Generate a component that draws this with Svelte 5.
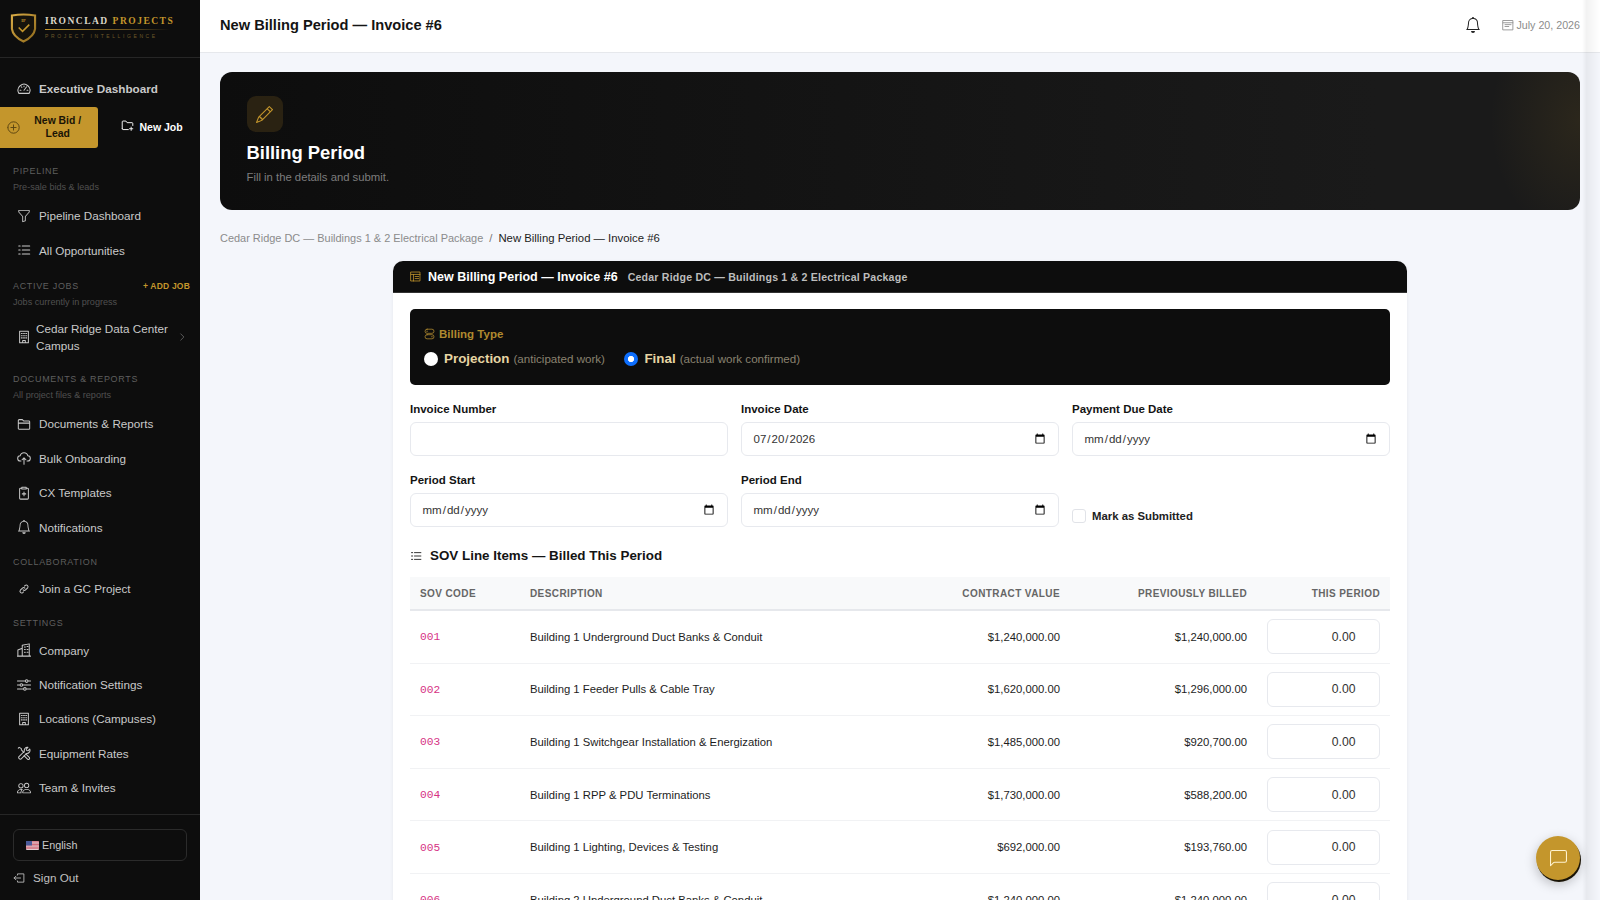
<script>
  const icons = {
    gauge: 'M2.2 13h11.6a6.8 6.8 0 1 0-11.6 0zM8 9.5l3-4M3.5 9.5h1M11.5 9.5h1M8 4.5v1M5 5.5l.6.6',
    list: 'M6 3.5h8.5M6 8h8.5M6 12.5h8.5M2 3.5h1.6M2 8h1.6M2 12.5h1.6',
    folderPlus: 'M1.5 12V3.5a1 1 0 0 1 1-1h3.5l1.5 2h6a1 1 0 0 1 1 1V8M1.5 12a1 1 0 0 0 1 1H9M12.5 10v4M10.5 12h4',
    plusCircle: 'M1 8a7 7 0 1 0 14 0a7 7 0 1 0-14 0M8 4.8v6.4M4.8 8h6.4',
    building: 'M3 1.5h10v13H3zM5 4h1M7.5 4h1M10 4h1M5 6.5h1M7.5 6.5h1M10 6.5h1M5 9h1M7.5 9h1M10 9h1M6.5 14.5V12h3v2.5',
    folder: 'M1.5 13V4a1 1 0 0 1 1-1h3.6l1.4 1.5h6a1 1 0 0 1 1 1V13a1 1 0 0 1-1 1h-11a1 1 0 0 1-1-1zM1.5 7h13',
    cloud: 'M4.5 11.5H4a3 3 0 0 1-.4-6 4.5 4.5 0 0 1 8.8 0 3 3 0 0 1-.4 6h-.5M8 15V8M5.8 10 8 7.8l2.2 2.2',
    clipboard: 'M5 2.5H4a1 1 0 0 0-1 1V14a1 1 0 0 0 1 1h8a1 1 0 0 0 1-1V3.5a1 1 0 0 0-1-1h-1M5.5 1.5h5v2h-5zM8 7v4M6 9h4',
    link: 'M7 9a2 2 0 0 0 2.8 0l2.4-2.4a2 2 0 0 0-2.8-2.8l-.8.8M9 7a2 2 0 0 0-2.8 0L3.8 9.4a2 2 0 0 0 2.8 2.8l.8-.8',
    buildings: 'M1 15V8l5-2v9M6 15V2.5L14 1v14M.5 15h15M8.5 4.5h1M11.5 4h1M8.5 7.5h1M11.5 7.5h1M8.5 10.5h1M11.5 10.5h1',
    sliders: 'M.5 3.5h9M12.5 3.5h3M.5 8h3M6.5 8h9M.5 12.5h7M10.5 12.5h5M9.5 3.5a1.5 1.5 0 1 0 3 0a1.5 1.5 0 1 0-3 0M3.5 8a1.5 1.5 0 1 0 3 0a1.5 1.5 0 1 0-3 0M7.5 12.5a1.5 1.5 0 1 0 3 0a1.5 1.5 0 1 0-3 0',
    tools: 'M1.5 2.5l1-1 2.5 1.5v1.5l3 3M10 9l4 4a1.4 1.4 0 0 1-2 2l-4-4M14.5 3.5l-2 2-1.5-.5-.5-1.5 2-2a3.5 3.5 0 0 0-4 4.5L2 12.5a2 2 0 0 0 2.5 2.5L11 8.5a3.5 3.5 0 0 0 3.5-5z',
    signOut: 'M6 4V2.5h8.5v11H6V12M10 8H1.5M4 5.5 1.5 8 4 10.5',
    toggles: 'M4.5 1h7a3 3 0 0 1 0 6h-7a3 3 0 0 1 0-6zM4.5 9h7a3 3 0 0 1 0 6h-7a3 3 0 0 1 0-6zM4 4h1M11 12h1',
    invoice: 'M1.5 1.5h13v13h-13zM1.5 5h13M5 5v9.5M7.5 8h5M7.5 11h5',
    calendar: 'M1.5 2h13v12.5h-13zM1.5 5h13M4 7.5h8M4 10h5',
    chevron: 'M6 3l5 5-5 5',
  };
  const solid = {
    funnel: 'M1.5 1.5A.5.5 0 0 1 2 1h12a.5.5 0 0 1 .5.5v2a.5.5 0 0 1-.128.334L10 8.692V13.5a.5.5 0 0 1-.342.474l-3 1A.5.5 0 0 1 6 14.5V8.692L1.628 3.834A.5.5 0 0 1 1.5 3.5zm1 .5v1.308l4.372 4.858A.5.5 0 0 1 7 8.5v5.306l2-.666V8.5a.5.5 0 0 1 .128-.334L13.5 3.308V2z',
    bell: 'M8 16a2 2 0 0 0 2-2H6a2 2 0 0 0 2 2M8 1.918l-.797.161A4 4 0 0 0 4 6c0 .628-.134 2.197-.459 3.742-.16.767-.376 1.566-.663 2.258h10.244c-.287-.692-.502-1.49-.663-2.258C12.134 8.197 12 6.628 12 6a4 4 0 0 0-3.203-3.92zM14.22 12c.223.447.481.801.78 1H1c.299-.199.557-.553.78-1C2.68 10.2 3 6.88 3 6c0-2.42 1.72-4.44 4.005-4.901a1 1 0 1 1 1.99 0A5 5 0 0 1 13 6c0 .88.32 4.2 1.22 6',
    pencil: 'M12.146.146a.5.5 0 0 1 .708 0l3 3a.5.5 0 0 1 0 .708l-10 10a.5.5 0 0 1-.168.11l-5 2a.5.5 0 0 1-.65-.65l2-5a.5.5 0 0 1 .11-.168zM11.207 2.5 13.5 4.793 14.793 3.5 12.5 1.207zm1.586 3L10.5 3.207 4 9.707V10h.5a.5.5 0 0 1 .5.5v.5h.5a.5.5 0 0 1 .5.5v.5h.293zm-9.761 5.175-.106.106-1.528 3.821 3.821-1.528.106-.106A.5.5 0 0 1 5 12.5V12h-.5a.5.5 0 0 1-.5-.5V11h-.5a.5.5 0 0 1-.468-.325',
    people: 'M15 14s1 0 1-1-1-4-5-4-5 3-5 4 1 1 1 1zm-7.978-1L7 12.996c.001-.264.167-1.03.76-1.72C8.312 10.629 9.282 10 11 10c1.717 0 2.687.63 3.24 1.276.593.69.758 1.457.76 1.72l-.008.002-.014.002zM11 7a2 2 0 1 0 0-4 2 2 0 0 0 0 4m3-2a3 3 0 1 1-6 0 3 3 0 0 1 6 0M6.936 9.28a6 6 0 0 0-1.23-.247A7 7 0 0 0 5 9c-4 0-5 3-5 4q0 1 1 1h4.216A2.24 2.24 0 0 1 5 13c0-1.01.377-2.042 1.09-2.904.243-.294.526-.569.846-.816M4.92 10A5.5 5.5 0 0 0 4 13H1c0-.26.164-1.03.76-1.724.545-.636 1.492-1.256 3.16-1.275ZM1.5 5.5a3 3 0 1 1 6 0 3 3 0 0 1-6 0m3-2a2 2 0 1 0 0 4 2 2 0 0 0 0-4',
    chat: 'M14 1a1 1 0 0 1 1 1v8a1 1 0 0 1-1 1H4.414A2 2 0 0 0 3 11.586l-2 2V2a1 1 0 0 1 1-1zM2 0a2 2 0 0 0-2 2v12.793a.5.5 0 0 0 .854.353l2.853-2.853A1 1 0 0 1 4.414 12H14a2 2 0 0 0 2-2V2a2 2 0 0 0-2-2z',
  };

  const docs = [
    ['folder', 'Documents & Reports'],
    ['cloud', 'Bulk Onboarding'],
    ['clipboard', 'CX Templates'],
    ['bell', 'Notifications'],
  ];
  const settings = [
    ['buildings', 'Company'],
    ['sliders', 'Notification Settings'],
    ['building', 'Locations (Campuses)'],
    ['tools', 'Equipment Rates'],
    ['people', 'Team & Invites'],
  ];
  const lines = [
    ['001', 'Building 1 Underground Duct Banks & Conduit', '$1,240,000.00', '$1,240,000.00'],
    ['002', 'Building 1 Feeder Pulls & Cable Tray', '$1,620,000.00', '$1,296,000.00'],
    ['003', 'Building 1 Switchgear Installation & Energization', '$1,485,000.00', '$920,700.00'],
    ['004', 'Building 1 RPP & PDU Terminations', '$1,730,000.00', '$588,200.00'],
    ['005', 'Building 1 Lighting, Devices & Testing', '$692,000.00', '$193,760.00'],
    ['006', 'Building 2 Underground Duct Banks & Conduit', '$1,240,000.00', '$1,240,000.00'],
  ];
</script>

{#snippet icon(name, cls = 'ico')}
  <svg class={cls} viewBox="0 0 16 16" aria-hidden="true">
    {#if solid[name]}
      <path d={solid[name]} fill="currentColor" />
    {:else}
      <path d={icons[name]} fill="none" stroke="currentColor" stroke-width="1.15" stroke-linecap="round" stroke-linejoin="round" />
    {/if}
  </svg>
{/snippet}

{#snippet navItem(name, text)}
  <a class="nav-item" href="#top">
    {@render icon(name)}
    <span>{text}</span>
  </a>
{/snippet}

<div class="app">
  <aside class="sidebar">
    <div class="brand">
      <svg class="shield" viewBox="0 0 28 32" aria-hidden="true">
        <defs>
          <linearGradient id="gold" x1="0" y1="0" x2="1" y2="1">
            <stop offset="0" stop-color="#d9ab45" />
            <stop offset="1" stop-color="#8f6a1c" />
          </linearGradient>
        </defs>
        <path d="M2 3 Q14 1 26 3 V17 Q25 25 14 30 Q3 25 2 17 Z" fill="#16130c" stroke="url(#gold)" stroke-width="2.2" />
        <path d="M9 15.5l4 4 7-7" fill="none" stroke="#c4962c" stroke-width="1.6" />
        <text x="14" y="9.5" text-anchor="middle" font-size="4.5" font-weight="700" font-family="Liberation Serif, serif" fill="#c4962c">IP</text>
      </svg>
      <div class="brand-text">
        <div class="brand-name">IRONCLAD <b>PROJECTS</b></div>
        <div class="brand-rule"></div>
        <div class="brand-sub">PROJECT INTELLIGENCE</div>
      </div>
    </div>

    <nav class="nav">
      <a class="nav-item exec" href="#top">
        {@render icon('gauge')}
        <span>Executive Dashboard</span>
      </a>
      <div class="quick">
        <button class="new-bid">
          {@render icon('plusCircle', 'bid-ico')}
          <span>New Bid / Lead</span>
        </button>
        <button class="new-job">
          {@render icon('folderPlus', 'job-ico')}
          <span>New Job</span>
        </button>
      </div>

      <div class="section first">
        <div class="sec-title">PIPELINE</div>
        <div class="sec-sub">Pre-sale bids &amp; leads</div>
      </div>
      {@render navItem('funnel', 'Pipeline Dashboard')}
      {@render navItem('list', 'All Opportunities')}

      <div class="section active">
        <div class="sec-title row">ACTIVE JOBS <span class="add-job">+ ADD JOB</span></div>
        <div class="sec-sub">Jobs currently in progress</div>
      </div>
      <a class="job" href="#top">
        {@render icon('building')}
        <span>Cedar Ridge Data Center Campus</span>
        {@render icon('chevron', 'chev')}
      </a>

      <div class="section docs">
        <div class="sec-title">DOCUMENTS &amp; REPORTS</div>
        <div class="sec-sub">All project files &amp; reports</div>
      </div>
      {#each docs as [name, text]}
        {@render navItem(name, text)}
      {/each}

      <div class="section solo">
        <div class="sec-title">COLLABORATION</div>
      </div>
      {@render navItem('link', 'Join a GC Project')}

      <div class="section solo">
        <div class="sec-title">SETTINGS</div>
      </div>
      {#each settings as [name, text]}
        {@render navItem(name, text)}
      {/each}
    </nav>

    <div class="side-foot">
      <div class="lang">
        <svg class="flag" viewBox="0 0 13 9" aria-hidden="true">
          <rect width="13" height="9" rx="1" fill="#e8e4e6" />
          <path d="M0 .7h13M0 2.1h13M0 3.5h13M0 4.9h13M0 6.3h13M0 7.7h13" stroke="#c8455a" stroke-width=".75" />
          <rect width="6" height="4.5" fill="#4a5a9a" />
        </svg>
        English
      </div>
      <a class="sign-out" href="#top">
        {@render icon('signOut')}
        Sign Out
      </a>
    </div>
  </aside>

  <div class="main">
    <header class="topbar">
      <h1>New Billing Period — Invoice #6</h1>
      <div class="top-right">
        {@render icon('bell', 'bell')}
        <span class="date">{@render icon('calendar', 'date-ico')}July 20, 2026</span>
      </div>
    </header>

    <div class="content">
      <section class="hero">
        <div class="hero-ico">{@render icon('pencil', 'pencil')}</div>
        <h2>Billing Period</h2>
        <p>Fill in the details and submit.</p>
      </section>

      <div class="crumbs">
        <a href="#top">Cedar Ridge DC — Buildings 1 &amp; 2 Electrical Package</a>
        <span class="slash">/</span>
        <span class="current">New Billing Period — Invoice #6</span>
      </div>

      <section class="card">
        <div class="card-head">
          {@render icon('invoice', 'head-ico')}
          <strong>New Billing Period — Invoice #6</strong>
          <small>Cedar Ridge DC — Buildings 1 &amp; 2 Electrical Package</small>
        </div>
        <div class="card-body">
          <div class="billing-type">
            <div class="bt-label">{@render icon('toggles', 'bt-ico')}Billing Type</div>
            <div class="bt-options">
              <label><input type="radio" name="btype" /><b>Projection</b> <em>(anticipated work)</em></label>
              <label><input type="radio" name="btype" checked /><b>Final</b> <em>(actual work confirmed)</em></label>
            </div>
          </div>

          <div class="fields">
            <div class="field">
              <label for="inv-no">Invoice Number</label>
              <input id="inv-no" type="text" />
            </div>
            <div class="field">
              <label for="inv-date">Invoice Date</label>
              <input id="inv-date" type="date" value="2026-07-20" />
            </div>
            <div class="field">
              <label for="due">Payment Due Date</label>
              <input id="due" type="date" />
            </div>
            <div class="field">
              <label for="start">Period Start</label>
              <input id="start" type="date" />
            </div>
            <div class="field">
              <label for="end">Period End</label>
              <input id="end" type="date" />
            </div>
            <label class="submitted"><input type="checkbox" />Mark as Submitted</label>
          </div>

          <h3 class="sov-title">{@render icon('list', 'sov-ico')}SOV Line Items — Billed This Period</h3>

          <table>
            <colgroup>
              <col style="width: 110px" />
              <col />
              <col style="width: 150px" />
              <col style="width: 187px" />
              <col style="width: 133px" />
            </colgroup>
            <thead>
              <tr>
                <th>SOV CODE</th>
                <th>DESCRIPTION</th>
                <th class="num">CONTRACT VALUE</th>
                <th class="num">PREVIOUSLY BILLED</th>
                <th class="num">THIS PERIOD</th>
              </tr>
            </thead>
            <tbody>
              {#each lines as [code, desc, contract, prev]}
                <tr>
                  <td><code>{code}</code></td>
                  <td>{desc}</td>
                  <td class="num">{contract}</td>
                  <td class="num">{prev}</td>
                  <td class="num"><input class="amount" type="number" value="0.00" step="0.01" /></td>
                </tr>
              {/each}
            </tbody>
          </table>
        </div>
      </section>
    </div>
  </div>

  <div class="edge-fade"></div>
  <button class="chat" aria-label="Open chat">{@render icon('chat', 'chat-ico')}</button>
</div>

<style>
  :global(body) {
    font-family: "Liberation Sans", Arial, sans-serif;
    background: #f4f6fb;
  }

  .app {
    display: flex;
    height: 100vh;
    overflow: hidden;
  }

  .sidebar {
    width: 200px;
    flex-shrink: 0;
    background: #0d0d0d;
    color: #c9c9c9;
    display: flex;
    flex-direction: column;
  }

  .brand {
    height: 58px;
    box-sizing: border-box;
    display: flex;
    align-items: center;
    gap: 8px;
    padding: 0 10px 2px 10px;
    border-bottom: 1px solid #262626;
  }

  .shield {
    width: 27px;
    height: 32px;
    flex-shrink: 0;
  }

  .brand-name {
    font-family: "Liberation Serif", serif;
    font-weight: 700;
    font-size: 9.5px;
    letter-spacing: 1.5px;
    color: #dcd7c9;
    white-space: nowrap;
  }

  .brand-name b {
    color: #c4962c;
  }

  .brand-rule {
    height: 1px;
    margin: 3px 4px 3px 0;
    background: linear-gradient(90deg, #c4962c, #5d4a1e 70%, transparent);
  }

  .brand-sub {
    font-size: 5px;
    letter-spacing: 2.6px;
    color: #6d5a2a;
    white-space: nowrap;
  }

  .nav {
    flex: 1;
    padding-top: 13px;
    min-height: 0;
  }

  .nav-item {
    display: flex;
    align-items: center;
    gap: 8px;
    height: 34.4px;
    padding-left: 17px;
    font-size: 11.7px;
    color: #c9c9c9;
    text-decoration: none;
  }

  .ico {
    width: 14px;
    height: 14px;
    flex-shrink: 0;
  }

  .exec {
    font-weight: 700;
    height: 35px;
  }

  .quick {
    display: flex;
    align-items: center;
    margin-top: 1px;
  }

  button {
    font-family: inherit;
    border: 0;
    cursor: pointer;
  }

  .new-bid {
    width: 97.5px;
    height: 41px;
    flex-shrink: 0;
    display: flex;
    align-items: center;
    padding: 0 6px 0 7px;
    background: #c4962c;
    color: #1a1406;
    border-radius: 0 3px 3px 0;
    font-size: 10.4px;
    font-weight: 700;
    line-height: 12.5px;
  }

  .new-bid span {
    flex: 1;
    padding: 0 0 0 4px;
    text-align: center;
  }

  .bid-ico {
    width: 13px;
    height: 13px;
    flex-shrink: 0;
    color: #5a4310;
  }

  .new-job {
    display: flex;
    align-items: center;
    gap: 6px;
    margin: -2px 0 0 23px;
    padding: 0;
    background: none;
    color: #fff;
    font-size: 10.5px;
    font-weight: 700;
  }

  .job-ico {
    width: 13px;
    height: 13px;
    margin-top: -3px;
  }

  .section {
    padding: 0 13px;
    margin-top: 11px;
  }

  .section.first {
    margin-top: 16.5px;
  }

  .section.active {
    margin-top: 12.5px;
  }

  .section.docs {
    margin-top: 16px;
  }

  .sec-title {
    font-size: 8.96px;
    letter-spacing: 0.7px;
    color: #5f5f5f;
    line-height: 12px;
  }

  .sec-title.row {
    display: flex;
    justify-content: space-between;
  }

  .add-job {
    margin-right: -3px;
    font-size: 8.5px;
    font-weight: 700;
    letter-spacing: 0.2px;
    color: #c4962c;
  }

  .sec-sub {
    font-size: 9.1px;
    color: #505050;
    line-height: 12px;
    margin-top: 4px;
    margin-bottom: 6px;
  }

  .section.solo {
    margin-top: 11.5px;
    margin-bottom: 4px;
  }

  .section.solo + .nav-item {
    height: 34px;
  }

  .job {
    display: flex;
    align-items: center;
    gap: 5px;
    margin-top: 9px;
    padding: 3px 13px 3px 17px;
    font-size: 11.7px;
    line-height: 17px;
    color: #c9c9c9;
    text-decoration: none;
  }

  .job span {
    flex: 1;
  }

  .chev {
    width: 10px;
    height: 10px;
    color: #777;
  }

  .side-foot {
    flex-shrink: 0;
    height: 86px;
    box-sizing: border-box;
    border-top: 1px solid #262626;
    padding: 14px 13px 0;
  }

  .lang {
    display: flex;
    align-items: center;
    gap: 3px;
    height: 32px;
    box-sizing: border-box;
    padding-left: 12px;
    border: 1px solid #2b2b2b;
    border-radius: 6px;
    font-size: 10.8px;
    color: #c9c9c9;
  }

  .flag {
    width: 13px;
    height: 9px;
  }

  .sign-out {
    display: flex;
    align-items: center;
    gap: 8px;
    height: 33px;
    font-size: 11.7px;
    color: #c0c0c0;
    text-decoration: none;
  }

  .sign-out .ico {
    width: 12px;
    height: 12px;
  }

  .main {
    flex: 1;
    min-width: 0;
    display: flex;
    flex-direction: column;
  }

  .topbar {
    height: 53px;
    flex-shrink: 0;
    box-sizing: border-box;
    display: flex;
    align-items: center;
    justify-content: space-between;
    padding: 0 20px 2px;
    background: #fff;
    border-bottom: 1px solid #e6e8ec;
  }

  .topbar h1 {
    margin: 0;
    font-size: 14.64px;
    font-weight: 700;
    color: #141414;
  }

  .top-right {
    display: flex;
    align-items: center;
    gap: 21px;
  }

  .bell {
    width: 16px;
    height: 16px;
    color: #222;
  }

  .date {
    display: flex;
    align-items: center;
    gap: 2px;
    font-size: 10.7px;
    color: #8c8c8c;
  }

  .date-ico {
    width: 12px;
    height: 12px;
  }

  .content {
    padding: 19px 20px 0;
    min-height: 0;
  }

  .hero {
    height: 138px;
    box-sizing: border-box;
    padding: 24px 26.5px 0;
    border-radius: 12px;
    background:
      radial-gradient(ellipse 90px 120px at 100% 35%, rgba(196, 150, 44, 0.1), transparent),
      linear-gradient(90deg, #0d0d0d, #1a1a1a 85%);
  }

  .hero-ico {
    width: 36px;
    height: 36px;
    display: flex;
    align-items: center;
    justify-content: center;
    border-radius: 9px;
    background: #2a2212;
    color: #c4962c;
  }

  .pencil {
    width: 17px;
    height: 17px;
  }

  .hero h2 {
    margin: 9px 0 0;
    font-size: 18.4px;
    line-height: 23px;
    color: #fff;
  }

  .hero p {
    margin: 7px 0 0;
    font-size: 11.3px;
    color: #7d7d7d;
  }

  .crumbs {
    display: flex;
    gap: 6px;
    margin-top: 22px;
    font-size: 11.35px;
    line-height: 13px;
  }

  .crumbs a {
    font-size: 10.95px;
    color: #8b8b8b;
    text-decoration: none;
  }

  .slash {
    color: #777;
  }

  .current {
    color: #1c1c1c;
  }

  .card {
    width: 1014px;
    margin: 16px auto 0;
    background: #fff;
    border-radius: 10px;
    box-shadow: 0 1px 4px rgba(20, 24, 40, 0.06);
  }

  .card-head {
    height: 32px;
    box-sizing: border-box;
    display: flex;
    align-items: center;
    padding: 0 17px;
    background: #0d0d0d;
    border-bottom: 1px solid #333;
    border-radius: 10px 10px 0 0;
    color: #fff;
  }

  .head-ico {
    width: 11px;
    height: 11px;
    margin-right: 7px;
    color: #c4962c;
  }

  .card-head strong {
    font-size: 12.5px;
  }

  .card-head small {
    margin-left: 10px;
    font-size: 10.6px;
    font-weight: 700;
    letter-spacing: 0.2px;
    color: #bdbdbd;
  }

  .card-body {
    padding: 16px 17px 17px;
  }

  .billing-type {
    height: 76px;
    box-sizing: border-box;
    padding: 19px 14px 0;
    background: #0d0d0d;
    border-radius: 5px;
  }

  .bt-label {
    display: flex;
    align-items: center;
    gap: 4px;
    font-size: 11.5px;
    font-weight: 700;
    color: #b08a2f;
  }

  .bt-ico {
    width: 11px;
    height: 12px;
  }

  .bt-options {
    display: flex;
    gap: 19.4px;
    margin-top: 11px;
  }

  .bt-options label {
    display: flex;
    align-items: center;
  }

  .bt-options input {
    appearance: none;
    width: 14px;
    height: 14px;
    margin: 0 6px 0 0;
    border-radius: 50%;
    background: #fff;
  }

  .bt-options input:checked {
    background: radial-gradient(circle, #fff 0 2.8px, #0d6efd 3.4px);
  }

  .bt-options b {
    font-size: 13.4px;
    color: #e6d5a3;
  }

  .bt-options em {
    margin-left: 4px;
    font-style: normal;
    font-size: 11.6px;
    color: #8a8270;
  }

  .fields {
    display: grid;
    grid-template-columns: repeat(3, 318px);
    column-gap: 13px;
    row-gap: 17px;
    margin-top: 17px;
  }

  .field label {
    display: block;
    margin-bottom: 5.5px;
    font-size: 11.5px;
    line-height: 14px;
    font-weight: 700;
    color: #141414;
  }

  .field input {
    display: block;
    width: 100%;
    height: 34.5px;
    box-sizing: border-box;
    padding: 0 10.5px;
    border: 1px solid #e7e9ee;
    border-radius: 6px;
    background: #fff;
    font-family: inherit;
    font-size: 11.5px;
    color: #333;
  }

  .submitted {
    display: flex;
    align-items: center;
    gap: 6px;
    align-self: end;
    height: 23px;
    font-size: 11.35px;
    font-weight: 700;
    color: #222;
  }

  .submitted input {
    appearance: none;
    width: 14px;
    height: 14px;
    margin: 0;
    border: 1px solid #e1e3e8;
    border-radius: 3px;
    background: #fff;
  }

  .sov-title {
    display: flex;
    align-items: center;
    gap: 8px;
    margin: 20.5px 0 13.5px;
    font-size: 13.4px;
    line-height: 16px;
    color: #141414;
  }

  .sov-ico {
    width: 12px;
    height: 12px;
  }

  table {
    width: 980px;
    table-layout: fixed;
    border-collapse: collapse;
    font-size: 11.3px;
    color: #1d1d1d;
  }

  th {
    height: 32px;
    padding: 0 10px;
    background: #f8f9fa;
    border-bottom: 2px solid #e6e8ec;
    text-align: left;
    font-size: 10px;
    letter-spacing: 0.4px;
    color: #666;
  }

  td {
    height: 51.6px;
    padding: 0 10px;
    border-bottom: 1px solid #f1f2f4;
  }

  .num {
    text-align: right;
  }

  code {
    font-family: "Liberation Mono", monospace;
    font-size: 11.2px;
    color: #d63384;
  }

  .amount {
    display: block;
    width: 113px;
    height: 35px;
    margin-left: -0.5px;
    box-sizing: border-box;
    padding: 0 8px 0 10px;
    border: 1px solid #e7e9ee;
    border-radius: 6px;
    background: #fff;
    font-family: inherit;
    font-size: 12.2px;
    text-align: right;
    color: #333;
  }

  /* faint shadow band down the right edge of the window */
  .edge-fade {
    position: fixed;
    top: 0;
    right: 0;
    bottom: 0;
    width: 18px;
    pointer-events: none;
    background: linear-gradient(90deg, transparent, rgba(0, 0, 0, 0.05) 25%, transparent);
  }

  .chat {
    position: fixed;
    left: 1536px;
    top: 836px;
    width: 44px;
    height: 44px;
    display: flex;
    align-items: center;
    justify-content: center;
    padding: 0;
    border-radius: 50%;
    background: #c4962c;
    color: #fff3d0;
    box-shadow: 1px 2px 0 #1a1406, 0 4px 12px rgba(0, 0, 0, 0.25);
  }

  .chat-ico {
    width: 17px;
    height: 17px;
  }
</style>
